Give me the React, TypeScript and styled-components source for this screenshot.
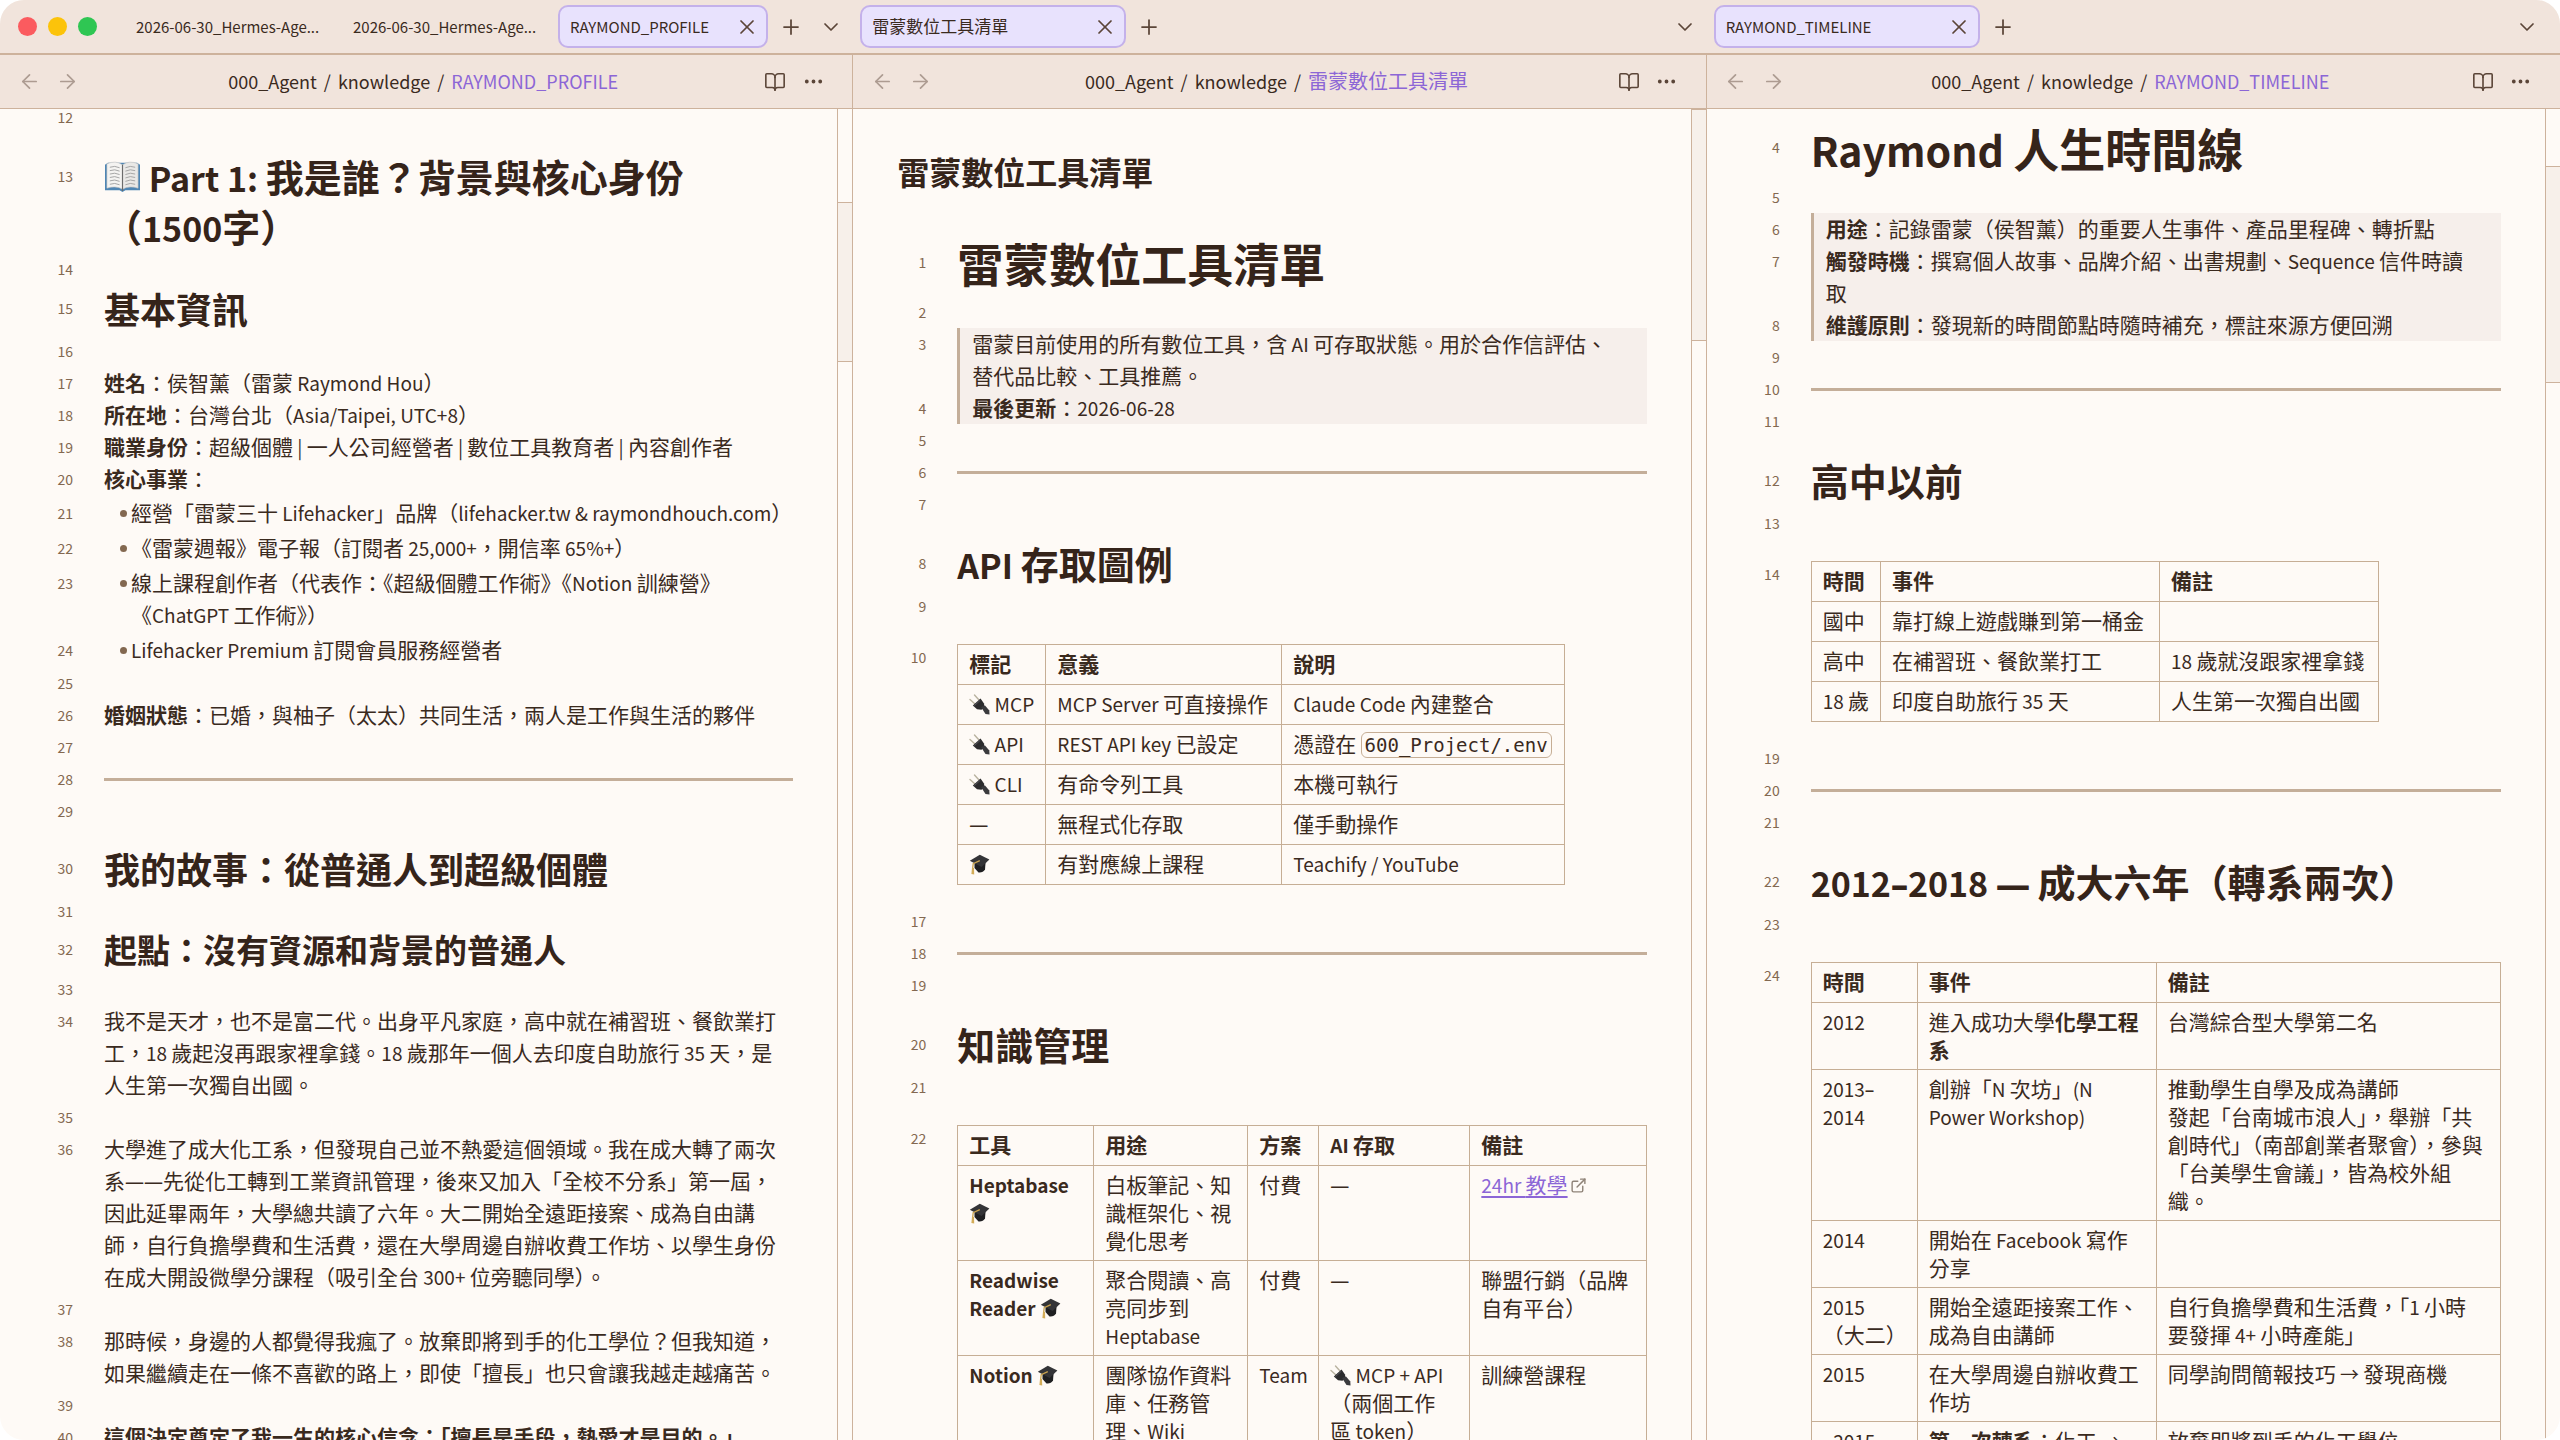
import React from 'react';
import styled, { createGlobalStyle } from 'styled-components';
import { ArrowLeft, ArrowRight, BookOpen, ChevronDown, Ellipsis, ExternalLink, Plus, X } from 'lucide-react';

const color = {
  bar: '#f1e4dc',
  page: '#fefaf6',
  quote: '#f6efeb',
  line: '#cdb29c',
  rule: '#c4ae99',
  tableLine: '#c6ae95',
  text: '#3a2a1e',
  heading: '#35241a',
  muted: '#836850',
  icon: '#5b4538',
  accent: '#8c66d6',
  tab: '#e8e2fd',
  tabLine: '#c4b1ea',
};

const GlobalStyle = createGlobalStyle`
  *, *::before, *::after { box-sizing: border-box; }
  body {
    margin: 0;
    background: #ffffff;
    color: ${color.text};
    font-family: "Noto Sans CJK TC", "Noto Sans", sans-serif;
    font-size: 21px;
    line-height: 32px;
  }
  button { font: inherit; color: inherit; background: none; border: 0; padding: 0; cursor: pointer; }
`;

const Window = styled.main`
  display: grid;
  grid-template-columns: repeat(3, minmax(0, 1fr));
  height: 100vh;
  overflow: hidden;
  border-radius: 24px;
  background: ${color.page};
`;

const Pane = styled.section`
  display: flex;
  flex-direction: column;
  min-width: 0;
  min-height: 0;
`;

const TabBar = styled.header<{ $last?: boolean }>`
  display: flex;
  align-items: center;
  height: 55px;
  padding: 0 ${(p) => (p.$last ? 16 : 5)}px 0 7px;
  background: ${color.bar};
  border-bottom: 2px solid ${color.line};
`;

const Lights = styled.div`
  display: flex;
  gap: 11px;
  padding: 0 27px 0 11px;
`;

const Light = styled.span<{ $color: string }>`
  width: 19px;
  height: 19px;
  border-radius: 50%;
  background: ${(p) => p.$color};
`;

const Tabs = styled.div`
  display: flex;
  gap: 7px;
  min-width: 0;
`;

const Tab = styled.div<{ $active?: boolean; $wide?: boolean }>`
  display: flex;
  align-items: center;
  justify-content: space-between;
  width: ${(p) => (p.$wide ? 266 : 210)}px;
  height: 43px;
  padding: 0 7px 0 10px;
  font-size: 17px;
  line-height: 24px;
  white-space: nowrap;
  border: 2px solid ${(p) => (p.$active ? color.tabLine : 'transparent')};
  border-radius: 10px;
  background: ${(p) => (p.$active ? color.tab : 'transparent')};
`;

const TabName = styled.button`
  padding-bottom: 2px;
`;

const IconButton = styled.button<{ $width?: number; $faint?: boolean }>`
  display: flex;
  flex: none;
  align-items: center;
  justify-content: center;
  width: ${(p) => p.$width ?? 38}px;
  height: 38px;
  color: ${color.icon};
  opacity: ${(p) => (p.$faint ? 0.45 : 1)};
`;

const Fill = styled.div`
  flex: 1;
`;

const Below = styled.div<{ $last?: boolean }>`
  display: flex;
  flex: 1;
  flex-direction: column;
  min-height: 0;
  border-right: ${(p) => (p.$last ? 0 : 1)}px solid ${color.line};
`;

const ViewHeader = styled.nav`
  display: flex;
  align-items: center;
  height: 54px;
  padding: 0 20px 0 10px;
  background: ${color.bar};
  border-bottom: 1px solid ${color.line};
`;

const Crumbs = styled.div`
  display: flex;
  flex: 1;
  justify-content: center;
  gap: 7px;
  padding: 0 0 2px 4px;
  font-size: 20px;
  line-height: 28px;

  a { color: inherit; text-decoration: none; }
  strong { font-weight: 400; color: ${color.accent}; }
`;

const View = styled.div`
  display: grid;
  flex: 1;
  grid-template-columns: minmax(0, 1fr) 15px;
  min-height: 0;
`;

const Editor = styled.article<{ $top: number }>`
  overflow: hidden;
  padding-right: 44px;

  & > :first-child { margin-top: ${(p) => p.$top}px; }
`;

const Track = styled.div<{ $rows: string }>`
  display: grid;
  grid-template-rows: ${(p) => p.$rows};
  border-left: 1px solid ${color.line};
`;

const Thumb = styled.div`
  grid-row: 2;
  border: solid ${color.line};
  border-width: 1px 0;
  background: #f7f0ea;
`;

const Row = styled.div<{ $pad?: string }>`
  display: grid;
  grid-template-columns: 73px minmax(0, 1fr);
  column-gap: 31px;
  padding: ${(p) => p.$pad ?? '0'};
`;

const Num = styled.span<{ $line?: number }>`
  font-size: 14px;
  line-height: ${(p) => p.$line ?? 32}px;
  text-align: right;
  color: ${color.muted};
`;

const Para = styled.p<{ $wide?: boolean }>`
  margin: -1px 0 1px;
  min-height: 32px;
  padding-right: ${(p) => (p.$wide ? 0 : 4)}px;
`;

const InlineTitle = styled.div`
  padding: 0 0 39px 44px;
  font-size: 32px;
  font-weight: 700;
  line-height: 48px;
  color: ${color.heading};
`;

const H1 = styled.h1`
  margin: 0;
  font-size: 46px;
  line-height: 56px;
  color: ${color.heading};
`;

const H2 = styled.h2`
  margin: 0;
  font-size: 38px;
  line-height: 50px;
  color: ${color.heading};
`;

const H3 = styled.h3`
  margin: 0;
  font-size: 36px;
  line-height: 46px;
  color: ${color.heading};
`;

const H4 = styled.h4`
  margin: 0;
  font-size: 33px;
  line-height: 44px;
  color: ${color.heading};
`;

const Latin = styled.span`
  font-size: 19px;
  line-height: 1;

  ${Tab} & { font-size: 15px; }
  ${Crumbs} & { font-size: 18px; }
  ${H1} & { font-size: 41px; }
  ${H2} & { font-size: 34px; }
`;

const Dash = styled(Latin)`
  font-family: "Noto Sans", sans-serif;

  ${H2} & { font-family: "Open Sans", "Noto Sans", sans-serif; font-weight: 800; }
`;

const Centred = styled.span`
  font-family: "Noto Sans CJK JP", sans-serif;
`;

const Rule = styled.hr`
  align-self: center;
  width: 100%;
  height: 3px;
  margin: 0;
  border: 0;
  background: ${color.rule};
`;

const Item = styled.div`
  display: flex;
  align-items: flex-start;
  padding-left: 16px;
`;

const Bullet = styled.span`
  display: flex;
  flex: none;
  align-items: center;
  width: 11px;
  height: 32px;

  &::before {
    content: "";
    width: 7px;
    height: 7px;
    border-radius: 50%;
    background: ${color.muted};
  }
`;

const Quote = styled.blockquote`
  display: flow-root;
  margin: 0;
  padding: 0 20px 0 12px;
  border-left: 3px solid ${color.rule};
  background: ${color.quote};
`;

const Table = styled.table<{ $full?: boolean }>`
  width: ${(p) => (p.$full ? '100%' : 'auto')};
  table-layout: ${(p) => (p.$full ? 'fixed' : 'auto')};
  justify-self: start;
  border-collapse: collapse;
  line-height: 28px;
  white-space: ${(p) => (p.$full ? 'normal' : 'nowrap')};

  th, td {
    height: 40px;
    padding: 4px ${(p) => (p.$full ? 15 : 11)}px 6px 11px;
    border: 1px solid ${color.tableLine};
    text-align: left;
    vertical-align: top;
  }

  th:last-child, td:last-child { padding-right: ${(p) => (p.$full ? 17 : 11)}px; }
`;

const Code = styled.code`
  padding: 1px 3px;
  border: 1px solid ${color.tableLine};
  border-radius: 6px;
  font-family: "DejaVu Sans Mono", monospace;
  font-size: 19px;
  line-height: 24px;
`;

const Link = styled.a`
  color: ${color.accent};
  text-decoration: underline;
  text-decoration-thickness: 2px;
  text-underline-offset: 3px;
`;

const Glyph = styled.svg<{ $size?: number }>`
  width: ${(p) => p.$size ?? 21}px;
  height: ${(p) => p.$size ?? 21}px;
  vertical-align: -3px;
`;

const OutIcon = styled(ExternalLink)`
  margin-left: 2px;
  color: #8f8378;
  vertical-align: -1px;
`;

/* Western runs are set one step smaller than the Chinese text around them. */
function mix(node: React.ReactNode): React.ReactNode {
  return React.Children.toArray(node).map((child, i) => {
    if (typeof child === 'string') {
      return child.split(/([\x20-\x7e→]+|[—–]+|[：？](?![《「]))/).map((part, j) => {
        const key = `${i}-${j}`;
        if (/^[—–]/.test(part)) return <Dash key={key}>{part}</Dash>;
        if (/^[\x20-\x7e→]/.test(part)) return <Latin key={key}>{part}</Latin>;
        if (/^[：？]$/.test(part)) return <Centred key={key}>{part}</Centred>;
        return part;
      });
    }
    if (React.isValidElement<{ children?: React.ReactNode }>(child) && child.type !== Code && child.props.children) {
      return React.cloneElement(child, undefined, mix(child.props.children));
    }
    return child;
  });
}

function Plug() {
  return (
    <Glyph viewBox="0 0 21 21" role="img" aria-label="plug">
      <path d="M1 5.5 L6 10 M5.5 1 L10 6" stroke="#b9b3a0" strokeWidth="1.4" strokeLinecap="round" />
      <path d="M3.8 11.5 L11.5 4.5 L15 9.5 L15.5 13 L12.5 15.8 L8 15.2 Z" fill="#2b2b2d" />
      <path d="M12 13 L16 11.5 L20.3 16.5 L20.5 20.5 L16.5 20 Z" fill="#3a3a3d" />
      <path d="M5.4 11.6 L11.3 6.3" stroke="#55555a" strokeWidth="1" />
    </Glyph>
  );
}

function Cap() {
  return (
    <Glyph viewBox="0 0 21 21" role="img" aria-label="graduation cap">
      <path d="M5.5 9 L16.5 9 L16 15.5 Q14 19 9.5 18.5 L5.5 14 Z" fill="#1f1f21" />
      <path d="M0.8 6.8 L10.8 0.8 L20.4 5.6 L12.6 13 Z" fill="#343437" />
      <path d="M10.8 6.6 L4.2 9.6 L3.6 15" fill="none" stroke="#c9a24d" strokeWidth="1.3" />
      <path d="M3 14 L5 14 L5.2 20.5 L2.4 20 Z" fill="#d3ac58" />
    </Glyph>
  );
}

function Book() {
  return (
    <Glyph $size={37} viewBox="0 0 38 38" role="img" aria-label="open book">
      <path d="M1 7 L4 5 L34 5 L37 7 L37 33 L22 33 L19 35 L16 33 L1 33 Z" fill="#4f86b4" />
      <path d="M3 6 Q12 2 19 7 L19 32 Q12 28 3 31 Z" fill="#f4f3f1" stroke="#bdbdbd" strokeWidth="0.6" />
      <path d="M35 6 Q26 2 19 7 L19 32 Q26 28 35 31 Z" fill="#e9e8e6" stroke="#bdbdbd" strokeWidth="0.6" />
      <path
        d="M6 9.5 Q11 7.500 16 10 M6 13 Q11 11 16 13.500 M6 16.500 Q11 14.500 16 17 M6 20 Q11 18 16 20.500 M6 23.500 Q11 21.500 16 24 M6 27 Q11 25 16 27.500 M22 10 Q27 7.500 32 9.500 M22 13.500 Q27 11 32 13 M22 17 Q27 14.500 32 16.500 M22 20.500 Q27 18 32 20 M22 24 Q27 21.500 32 23.500 M22 27.500 Q27 25 32 27"
        fill="none"
        stroke="#a3a3a3"
        strokeWidth="1"
      />
      <path d="M19 7 L19 34" stroke="#6b6b6b" strokeWidth="1.2" />
    </Glyph>
  );
}

function Blank({ n }: { n: number }) {
  return (
    <Row>
      <Num>{n}</Num>
      <Para />
    </Row>
  );
}

function Line({ n, children }: { n: number; children: React.ReactNode }) {
  return (
    <Row>
      <Num>{n}</Num>
      <Para>{mix(children)}</Para>
    </Row>
  );
}

function Divider({ n }: { n: number }) {
  return (
    <Row>
      <Num>{n}</Num>
      <Rule />
    </Row>
  );
}

function Title({ n, children }: { n: number; children: React.ReactNode }) {
  return (
    <Row $pad="0 0 6px">
      <Num $line={56}>{n}</Num>
      <H1>{mix(children)}</H1>
    </Row>
  );
}

function Heading({ n, children }: { n: number; children: React.ReactNode }) {
  return (
    <Row $pad="18px 0 2px">
      <Num $line={50}>{n}</Num>
      <H2>{mix(children)}</H2>
    </Row>
  );
}

function Subheading({ n, spaced, children }: { n: number; spaced?: boolean; children: React.ReactNode }) {
  return (
    <Row $pad={spaced ? '18px 0 4px' : '0 0 4px'}>
      <Num $line={46}>{n}</Num>
      <H3>{mix(children)}</H3>
    </Row>
  );
}

function Bulleted({ n, children }: { n: number; children: React.ReactNode }) {
  return (
    <Row $pad="2px 0 1px">
      <Num>{n}</Num>
      <Item>
        <Bullet />
        <Para $wide>{mix(children)}</Para>
      </Item>
    </Row>
  );
}

function Quoted({ n, children }: { n: number; children: React.ReactNode }) {
  return (
    <Row>
      <Num>{n}</Num>
      <Quote>
        <Para>{mix(children)}</Para>
      </Quote>
    </Row>
  );
}

type Cell = React.ReactNode;

function DataTable({ n, widths, head, rows, full }: { n: number; widths: string[]; head: Cell[]; rows: Cell[][]; full?: boolean }) {
  return (
    <Row $pad="22px 0 20px">
      <Num $line={26}>{n}</Num>
      <Table $full={full}>
        <colgroup>
          {widths.map((w, i) => (
            <col key={i} style={{ width: w }} />
          ))}
        </colgroup>
        <thead>
          <tr>
            {head.map((c, i) => (
              <th key={i}>{mix(c)}</th>
            ))}
          </tr>
        </thead>
        <tbody>
          {rows.map((r, i) => (
            <tr key={i}>
              {r.map((c, j) => (
                <td key={j}>{mix(c)}</td>
              ))}
            </tr>
          ))}
        </tbody>
      </Table>
    </Row>
  );
}

function ActiveTab({ title, wide }: { title: string; wide?: boolean }) {
  return (
    <Tab $active $wide={wide}>
      <TabName type="button">{mix(title)}</TabName>
      <IconButton $width={24} type="button" aria-label="Close tab">
        <X size={24} strokeWidth={1.75} />
      </IconButton>
    </Tab>
  );
}

function TabTools() {
  return (
    <>
      <IconButton $width={46} type="button" aria-label="New tab">
        <Plus size={24} strokeWidth={1.75} />
      </IconButton>
      <Fill />
      <IconButton $width={34} type="button" aria-label="Tab list">
        <ChevronDown size={24} strokeWidth={1.75} />
      </IconButton>
    </>
  );
}

interface BodyProps {
  title: string;
  top: number;
  rows: string;
  last?: boolean;
  children: React.ReactNode;
}

function PaneBody({ title, top, rows, last, children }: BodyProps) {
  return (
    <Below $last={last}>
      <ViewHeader>
        <IconButton $faint type="button" aria-label="Back">
          <ArrowLeft size={23} strokeWidth={1.75} />
        </IconButton>
        <IconButton $faint type="button" aria-label="Forward">
          <ArrowRight size={23} strokeWidth={1.75} />
        </IconButton>
        <Crumbs>
          <a href="#agent">{mix('000_Agent')}</a>
          <span>{mix('/')}</span>
          <a href="#knowledge">{mix('knowledge')}</a>
          <span>{mix('/')}</span>
          <strong>{mix(title)}</strong>
        </Crumbs>
        <IconButton type="button" aria-label="Reading view">
          <BookOpen size={22} strokeWidth={1.75} />
        </IconButton>
        <IconButton type="button" aria-label="More options">
          <Ellipsis size={23} strokeWidth={2} />
        </IconButton>
      </ViewHeader>
      <View>
        <Editor $top={top}>{children}</Editor>
        <Track $rows={rows}>
          <Thumb />
        </Track>
      </View>
    </Below>
  );
}

function ProfilePane() {
  return (
    <Pane>
      <TabBar>
        <Lights>
          <Light $color="#fb5b5f" />
          <Light $color="#fcc30a" />
          <Light $color="#2fc653" />
        </Lights>
        <Tabs>
          <Tab>
            <TabName type="button">{mix('2026-06-30_Hermes-Age...')}</TabName>
          </Tab>
          <Tab>
            <TabName type="button">{mix('2026-06-30_Hermes-Age...')}</TabName>
          </Tab>
          <ActiveTab title="RAYMOND_PROFILE" />
        </Tabs>
        <TabTools />
      </TabBar>
      <PaneBody title="RAYMOND_PROFILE" top={-8} rows="7fr 12fr 81fr">
        <Blank n={12} />
        <Heading n={13}>
          <Book /> Part 1: 我是誰？背景與核心身份（1500字）
        </Heading>
        <Blank n={14} />
        <Subheading n={15}>基本資訊</Subheading>
        <Blank n={16} />
        <Line n={17}>
          <strong>姓名</strong>：侯智薰（雷蒙 Raymond Hou）
        </Line>
        <Line n={18}>
          <strong>所在地</strong>：台灣台北（Asia/Taipei, UTC+8）
        </Line>
        <Line n={19}>
          <strong>職業身份</strong>：超級個體 | 一人公司經營者 | 數位工具教育者 | 內容創作者
        </Line>
        <Line n={20}>
          <strong>核心事業</strong>：
        </Line>
        <Bulleted n={21}>經營「雷蒙三十 Lifehacker」品牌（lifehacker.tw &amp; raymondhouch.com）</Bulleted>
        <Bulleted n={22}>《雷蒙週報》電子報（訂閱者 25,000+，開信率 65%+）</Bulleted>
        <Bulleted n={23}>線上課程創作者（代表作：《超級個體工作術》《Notion 訓練營》《ChatGPT 工作術》）</Bulleted>
        <Bulleted n={24}>Lifehacker Premium 訂閱會員服務經營者</Bulleted>
        <Blank n={25} />
        <Line n={26}>
          <strong>婚姻狀態</strong>：已婚，與柚子（太太）共同生活，兩人是工作與生活的夥伴
        </Line>
        <Blank n={27} />
        <Divider n={28} />
        <Blank n={29} />
        <Subheading spaced n={30}>我的故事：從普通人到超級個體</Subheading>
        <Blank n={31} />
        <Row $pad="0 0 2px">
          <Num $line={44}>32</Num>
          <H4>{mix('起點：沒有資源和背景的普通人')}</H4>
        </Row>
        <Blank n={33} />
        <Line n={34}>
          我不是天才，也不是富二代。出身平凡家庭，高中就在補習班、餐飲業打工，18 歲起沒再跟家裡拿錢。18 歲那年一個人去印度自助旅行 35 天，是人生第一次獨自出國。
        </Line>
        <Blank n={35} />
        <Line n={36}>
          大學進了成大化工系，但發現自己並不熱愛這個領域。我在成大轉了兩次系——先從化工轉到工業資訊管理，後來又加入「全校不分系」第一屆，因此延畢兩年，大學總共讀了六年。大二開始全遠距接案、成為自由講師，自行負擔學費和生活費，還在大學周邊自辦收費工作坊、以學生身份在成大開設微學分課程（吸引全台 300+ 位旁聽同學）。
        </Line>
        <Blank n={37} />
        <Line n={38}>
          那時候，身邊的人都覺得我瘋了。放棄即將到手的化工學位？但我知道，如果繼續走在一條不喜歡的路上，即使「擅長」也只會讓我越走越痛苦。
        </Line>
        <Blank n={39} />
        <Line n={40}>
          <strong>這個決定奠定了我一生的核心信念：「擅長是手段，熱愛才是目的。」</strong>
        </Line>
      </PaneBody>
    </Pane>
  );
}

function ToolsPane() {
  return (
    <Pane>
      <TabBar>
        <Tabs>
          <ActiveTab wide title="雷蒙數位工具清單" />
        </Tabs>
        <TabTools />
      </TabBar>
      <PaneBody title="雷蒙數位工具清單" top={38} rows="0fr 174fr 826fr">
        <InlineTitle>雷蒙數位工具清單</InlineTitle>
        <Title n={1}>雷蒙數位工具清單</Title>
        <Blank n={2} />
        <Quoted n={3}>雷蒙目前使用的所有數位工具，含 AI 可存取狀態。用於合作信評估、替代品比較、工具推薦。</Quoted>
        <Quoted n={4}>
          <strong>最後更新</strong>：2026-06-28
        </Quoted>
        <Blank n={5} />
        <Divider n={6} />
        <Blank n={7} />
        <Heading n={8}>API 存取圖例</Heading>
        <Blank n={9} />
        <DataTable
          n={10}
          widths={['88px', '236px', '283px']}
          head={['標記', '意義', '說明']}
          rows={[
            [<><Plug /> MCP</>, 'MCP Server 可直接操作', 'Claude Code 內建整合'],
            [<><Plug /> API</>, 'REST API key 已設定', <>憑證在 <Code>600_Project/.env</Code></>],
            [<><Plug /> CLI</>, '有命令列工具', '本機可執行'],
            ['—', '無程式化存取', '僅手動操作'],
            [<Cap />, '有對應線上課程', 'Teachify / YouTube'],
          ]}
        />
        <Blank n={17} />
        <Divider n={18} />
        <Blank n={19} />
        <Heading n={20}>知識管理</Heading>
        <Blank n={21} />
        <DataTable
          n={22}
          full
          widths={['136px', '154px', '71px', '151px', 'auto']}
          head={['工具', '用途', '方案', 'AI 存取', '備註']}
          rows={[
            [
              <strong>Heptabase <Cap /></strong>,
              '白板筆記、知識框架化、視覺化思考',
              '付費',
              '—',
              <><Link href="#tutorial">24hr 教學</Link><OutIcon size={17} strokeWidth={2} /></>,
            ],
            [<strong>Readwise Reader <Cap /></strong>, '聚合閱讀、高亮同步到 Heptabase', '付費', '—', '聯盟行銷（品牌自有平台）'],
            [
              <strong>Notion <Cap /></strong>,
              '團隊協作資料庫、任務管理、Wiki',
              'Team',
              <><Plug /> MCP + API（兩個工作區 token）</>,
              '訓練營課程',
            ],
          ]}
        />
      </PaneBody>
    </Pane>
  );
}

function TimelinePane() {
  return (
    <Pane>
      <TabBar $last>
        <Tabs>
          <ActiveTab wide title="RAYMOND_TIMELINE" />
        </Tabs>
        <TabTools />
      </TabBar>
      <PaneBody last title="RAYMOND_TIMELINE" top={10} rows="43fr 163fr 794fr">
        <Title n={4}>Raymond 人生時間線</Title>
        <Blank n={5} />
        <Quoted n={6}>
          <strong>用途</strong>：記錄雷蒙（侯智薰）的重要人生事件、產品里程碑、轉折點
        </Quoted>
        <Quoted n={7}>
          <strong>觸發時機</strong>：撰寫個人故事、品牌介紹、出書規劃、Sequence 信件時讀取
        </Quoted>
        <Quoted n={8}>
          <strong>維護原則</strong>：發現新的時間節點時隨時補充，標註來源方便回溯
        </Quoted>
        <Blank n={9} />
        <Divider n={10} />
        <Blank n={11} />
        <Heading n={12}>高中以前</Heading>
        <Blank n={13} />
        <DataTable
          n={14}
          widths={['69px', '279px', '219px']}
          head={['時間', '事件', '備註']}
          rows={[
            ['國中', '靠打線上遊戲賺到第一桶金', ''],
            ['高中', '在補習班、餐飲業打工', '18 歲就沒跟家裡拿錢'],
            ['18 歲', '印度自助旅行 35 天', '人生第一次獨自出國'],
          ]}
        />
        <Blank n={19} />
        <Divider n={20} />
        <Blank n={21} />
        <Heading n={22}>2012–2018 — 成大六年（轉系兩次）</Heading>
        <Blank n={23} />
        <DataTable
          n={24}
          full
          widths={['106px', '239px', 'auto']}
          head={['時間', '事件', '備註']}
          rows={[
            ['2012', <>進入成功大學<strong>化學工程系</strong></>, '台灣綜合型大學第二名'],
            [
              '2013–2014',
              '創辦「N 次坊」(N Power Workshop)',
              <>推動學生自學及成為講師<br />發起「台南城市浪人」，舉辦「共創時代」（南部創業者聚會），參與「台美學生會議」，皆為校外組織。</>,
            ],
            ['2014', '開始在 Facebook 寫作分享', ''],
            ['2015（大二）', '開始全遠距接案工作、成為自由講師', '自行負擔學費和生活費，「1 小時要發揮 4+ 小時產能」'],
            ['2015', '在大學周邊自辦收費工作坊', '同學詢問簡報技巧 → 發現商機'],
            ['~2015', <><strong>第一次轉系</strong>：化工 → 工業資訊管理</>, '放棄即將到手的化工學位'],
          ]}
        />
      </PaneBody>
    </Pane>
  );
}

export default function App() {
  return (
    <>
      <GlobalStyle />
      <Window>
        <ProfilePane />
        <ToolsPane />
        <TimelinePane />
      </Window>
    </>
  );
}
